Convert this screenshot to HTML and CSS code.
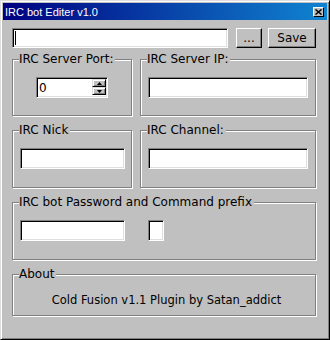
FILE: index.html
```html
<!DOCTYPE html>
<html>
<head>
<meta charset="utf-8">
<link rel="stylesheet" href="styles.css">
</head>
<body>
<div class="window">
  <div class="titlebar">
    <span class="title">IRC bot Editer v1.0</span>
    <span class="close"><svg width="7" height="6" viewBox="0 0 7 6"><path d="M0.5 0.5 L6.5 5.5 M6.5 0.5 L0.5 5.5" stroke="#000" stroke-width="1.5" fill="none"/></svg></span>
  </div>
  <div class="content">
    <div class="toprow">
      <div class="field main"><span class="caret"></span></div>
      <div class="btn dots">...</div>
      <div class="btn save">Save</div>
    </div>
    <div class="row">
      <div class="group small center">
        <div class="legend">IRC Server Port:</div>
        <div class="inner">
          <div class="field spin"><span class="val">0</span>
            <div class="spinbtns">
              <div class="sb"><svg width="5" height="3" viewBox="0 0 5 3"><path d="M2.5 0 L5 3 L0 3 Z" fill="#000"/></svg></div>
              <div class="sb"><svg width="5" height="3" viewBox="0 0 5 3"><path d="M0 0 L5 0 L2.5 3 Z" fill="#000"/></svg></div>
            </div>
          </div>
        </div>
      </div>
      <div class="group large">
        <div class="legend">IRC Server IP:</div>
        <div class="inner"><div class="field wide"></div></div>
      </div>
    </div>
    <div class="row">
      <div class="group small tall">
        <div class="legend">IRC Nick</div>
        <div class="inner"><div class="field nick"></div></div>
      </div>
      <div class="group large tall">
        <div class="legend">IRC Channel:</div>
        <div class="inner"><div class="field wide"></div></div>
      </div>
    </div>
    <div class="group full tall">
      <div class="legend">IRC bot Password and Command prefix</div>
      <div class="inner pw"><div class="field nick"></div><div class="field prefix"></div></div>
    </div>
    <div class="group full about">
      <div class="legend">About</div>
      <div class="abouttext">Cold Fusion v1.1 Plugin by Satan_addict</div>
    </div>
  </div>
</div>
</body>
</html>
```

FILE: styles.css
```css
* { box-sizing: border-box; }
html, body { margin: 0; padding: 0; background: #c0c0c0; }
body { font-family: "DejaVu Sans", sans-serif; font-size: 12px; color: #000; }

.window {
  width: 330px;
  height: 340px;
  background: #c0c0c0;
  border: 1px solid;
  border-color: #dfdfdf #000 #000 #dfdfdf;
  box-shadow: inset 1px 1px #fff, inset -1px -1px #808080;
  padding: 2px;
}

.titlebar {
  height: 17px;
  background: linear-gradient(to right, #000080, #1084d0);
  display: flex;
  align-items: center;
  justify-content: space-between;
  padding: 0 3px 0 2px;
}
.title {
  font-family: "Liberation Sans", Arial, sans-serif;
  font-size: 11px;
  color: #fff;
  line-height: 17px;
  padding-top: 1px;
}
.close {
  width: 11px;
  height: 10px;
  background: #c0c0c0;
  border: 1px solid;
  border-color: #fff #000 #000 #fff;
  display: flex;
  align-items: center;
  justify-content: center;
}
.close svg { display: block; }

.content { padding: 8px 0 0 9px; width: 313px; }

.toprow { display: flex; height: 20px; }
.field {
  background: #fff;
  border: 1px solid;
  border-color: #808080 #fff #fff #808080;
  box-shadow: inset 1px 1px #000, inset -1px -1px #dfdfdf;
  height: 21px;
}
.field.main { width: 216px; height: 20px; position: relative; }
.caret { position: absolute; left: 2px; top: 2px; width: 1px; height: 14px; background: #000; }

.btn {
  height: 20px;
  border: 1px solid;
  border-color: #fff #000 #000 #fff;
  box-shadow: inset -1px -1px #808080;
  text-align: center;
  line-height: 18px;
}
.dots { width: 26px; margin-left: 8px; }
.save { width: 48px; margin-left: 6px; }

.row { display: flex; gap: 8px; margin-top: 11px; }
.row + .row { margin-top: 14px; }
.row + .full { margin-top: 14px; }
.full + .full { margin-top: 14px; }

.group {
  border: 1px solid #808080;
  box-shadow: inset 1px 1px #fff, 1px 1px #fff;
  height: 57px;
}
.group.tall { height: 58px; }
.group.small { width: 120px; }
.group.large { width: 176px; }
.group.full { width: 304px; }
.group.about { height: 42px; }

.legend {
  margin: -8px 0 0 6px;
  padding: 0 2px 0 0;
  background: #c0c0c0;
  width: fit-content;
  line-height: 14px;
  height: 14px;
  white-space: nowrap;
}
.inner { padding: 11px 0 0 7px; display: flex; }
.group.center .inner { justify-content: center; padding-left: 0; }
.inner.pw { gap: 23px; }

.field.wide { width: 160px; }
.field.nick { width: 105px; }
.field.prefix { width: 16px; }

.field.spin { width: 72px; display: flex; justify-content: space-between; padding: 1px; }
.val { line-height: 19px; padding-left: 1px; }
.spinbtns { display: flex; flex-direction: column; }
.sb {
  width: 14px;
  height: 8px;
  background: #c0c0c0;
  border: 1px solid;
  border-color: #dfdfdf #000 #000 #dfdfdf;
  box-shadow: inset 1px 1px #fff, inset -1px -1px #808080;
  display: flex;
  align-items: center;
  justify-content: center;
}
.sb svg { display: block; }

.abouttext { text-align: center; margin-top: 12px; line-height: 14px; padding-left: 5px; font-size: 11.5px; }
```
